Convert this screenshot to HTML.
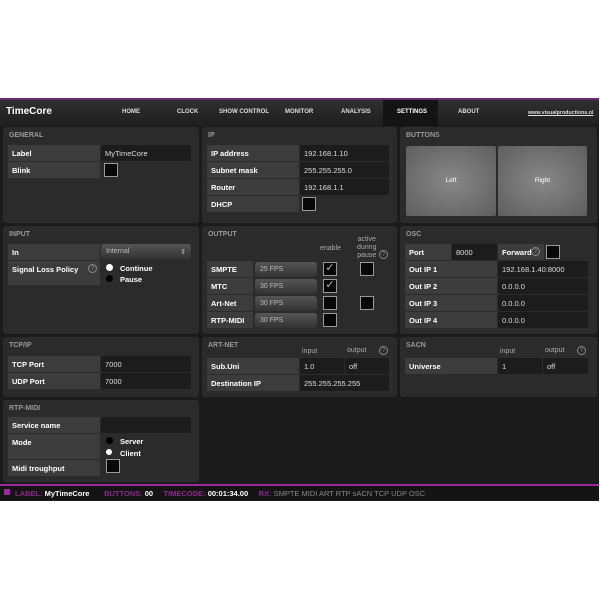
<!DOCTYPE html><html><head><style>
body{margin:0;width:600px;height:600px;background:#fff;position:relative;overflow:hidden;font-family:"Liberation Sans",sans-serif;font-size:7.5px;color:#fff}
div{position:absolute;box-sizing:border-box}
#app{left:0;top:98px;width:599px;height:403px;background:#1b1b1b;border-top:2px solid #6a2a6a}
.p{background:#2b2b2b;border-radius:3px}
.h{color:#9a9a9a;font-weight:bold;font-size:7px;left:6px;top:5px}
.l{background:#3c3c3c;padding:4px 0 0 4px;font-weight:bold;height:17px;border-bottom:1px solid #2b2b2b;white-space:nowrap}
.v{background:#1c1c1c;padding:4px 0 0 4px;height:16px;color:#ddd;border-radius:2px}
.cb{width:14px;height:14px;background:#080808;border:1.5px solid #999;font-size:11px;line-height:11px;text-align:center;color:#bbb}
.sel{height:15px;background:linear-gradient(#555,#333);border-radius:3px;color:#bbb;padding:4px 0 0 5px;font-size:7px}
.q{width:9px;height:9px;border:1px solid #888;border-radius:50%;color:#888;font-size:6px;text-align:center;line-height:8px}
.r{width:7px;height:7px;border-radius:50%;background:#000}
.rw{background:#fff}
.t{font-weight:bold}
.nav{top:9px;font-size:6px;color:#ddd;font-weight:bold}
.g{color:#aaa;font-size:7px}
</style></head><body>
<div id="app">
<div style="left:0;top:0;width:599px;height:26px;background:linear-gradient(#303030,#1e1e1e)"></div>
<div style="left:6px;top:6px;font-size:10px;font-weight:bold">TimeCore</div>
<div style="left:383px;top:0;width:55px;height:26px;background:#141414"></div>
<div class="nav" style="left:122px">HOME</div>
<div class="nav" style="left:177px">CLOCK</div>
<div class="nav" style="left:219px">SHOW CONTROL</div>
<div class="nav" style="left:285px">MONITOR</div>
<div class="nav" style="left:341px">ANALYSIS</div>
<div class="nav" style="left:397px;color:#fff">SETTINGS</div>
<div class="nav" style="left:458px">ABOUT</div>
<div class="nav" style="left:528px;text-decoration:underline;font-size:5.3px;top:10px">www.visualproductions.nl</div>
</div>
<!-- GENERAL -->
<div class="p" style="left:3px;top:127px;width:196px;height:96px"><div class="h">GENERAL</div></div>
<div class="l" style="left:8px;top:145px;width:92px">Label</div><div class="v" style="left:101px;top:145px;width:90px">MyTimeCore</div>
<div class="l" style="left:8px;top:162px;width:92px">Blink</div><div class="cb" style="left:104px;top:163px"></div>
<!-- IP -->
<div class="p" style="left:202px;top:127px;width:195px;height:96px"><div class="h">IP</div></div>
<div class="l" style="left:207px;top:145px;width:92px">IP address</div><div class="v" style="left:300px;top:145px;width:89px">192.168.1.10</div>
<div class="l" style="left:207px;top:162px;width:92px">Subnet mask</div><div class="v" style="left:300px;top:162px;width:89px">255.255.255.0</div>
<div class="l" style="left:207px;top:179px;width:92px">Router</div><div class="v" style="left:300px;top:179px;width:89px">192.168.1.1</div>
<div class="l" style="left:207px;top:196px;width:92px">DHCP</div><div class="cb" style="left:302px;top:197px"></div>
<!-- BUTTONS -->
<div class="p" style="left:400px;top:127px;width:197px;height:96px"><div class="h">BUTTONS</div></div>
<div style="left:406px;top:146px;width:90px;height:70px;background:radial-gradient(#888,#5e5e5e);border-radius:2px;text-align:center;padding-top:31px;font-size:6.5px">Left</div>
<div style="left:498px;top:146px;width:89px;height:70px;background:radial-gradient(#888,#5e5e5e);border-radius:2px;text-align:center;padding-top:31px;font-size:6.5px">Right</div>
<!-- INPUT -->
<div class="p" style="left:3px;top:226px;width:196px;height:108px"><div class="h">INPUT</div></div>
<div class="l" style="left:8px;top:244px;width:92px">In</div><div class="sel" style="left:101px;top:244px;width:90px">Internal<span style="position:absolute;right:5px">⇕</span></div>
<div class="l" style="left:8px;top:261px;width:92px;height:25px">Signal Loss Policy</div><div class="q" style="left:88px;top:264px">?</div>
<div class="r rw" style="left:106px;top:264px"></div><div class="t" style="left:120px;top:264px">Continue</div>
<div class="r" style="left:106px;top:275px"></div><div class="t" style="left:120px;top:275px">Pause</div>
<!-- OUTPUT -->
<div class="p" style="left:202px;top:226px;width:195px;height:108px"><div class="h">OUTPUT</div></div>
<div class="g" style="left:320px;top:245px">enable</div>
<div class="g" style="left:357px;top:236px;text-align:center;line-height:8px">active<br>during<br>pause</div><div class="q" style="left:379px;top:250px">?</div>
<div class="l" style="left:207px;top:261px;width:46px">SMPTE</div><div class="sel" style="left:255px;top:262px;width:62px">25 FPS</div><div class="cb" style="left:323px;top:262px">✓</div><div class="cb" style="left:360px;top:262px"></div>
<div class="l" style="left:207px;top:278px;width:46px">MTC</div><div class="sel" style="left:255px;top:279px;width:62px">30 FPS</div><div class="cb" style="left:323px;top:279px">✓</div>
<div class="l" style="left:207px;top:295px;width:46px">Art-Net</div><div class="sel" style="left:255px;top:296px;width:62px">30 FPS</div><div class="cb" style="left:323px;top:296px"></div><div class="cb" style="left:360px;top:296px"></div>
<div class="l" style="left:207px;top:312px;width:46px">RTP-MIDI</div><div class="sel" style="left:255px;top:313px;width:62px">30 FPS</div><div class="cb" style="left:323px;top:313px"></div>
<!-- OSC -->
<div class="p" style="left:400px;top:226px;width:197px;height:108px"><div class="h">OSC</div></div>
<div class="l" style="left:405px;top:244px;width:46px">Port</div><div class="v" style="left:452px;top:244px;width:45px">8000</div>
<div class="l" style="left:498px;top:244px;width:46px">Forward</div><div class="q" style="left:531px;top:247px">?</div><div class="cb" style="left:546px;top:245px"></div>
<div class="l" style="left:405px;top:261px;width:92px">Out IP 1</div><div class="v" style="left:498px;top:261px;width:90px">192.168.1.40:8000</div>
<div class="l" style="left:405px;top:278px;width:92px">Out IP 2</div><div class="v" style="left:498px;top:278px;width:90px">0.0.0.0</div>
<div class="l" style="left:405px;top:295px;width:92px">Out IP 3</div><div class="v" style="left:498px;top:295px;width:90px">0.0.0.0</div>
<div class="l" style="left:405px;top:312px;width:92px">Out IP 4</div><div class="v" style="left:498px;top:312px;width:90px">0.0.0.0</div>
<!-- TCP/IP -->
<div class="p" style="left:3px;top:337px;width:196px;height:60px"><div class="h">TCP/IP</div></div>
<div class="l" style="left:8px;top:356px;width:92px">TCP Port</div><div class="v" style="left:101px;top:356px;width:90px">7000</div>
<div class="l" style="left:8px;top:373px;width:92px">UDP Port</div><div class="v" style="left:101px;top:373px;width:90px">7000</div>
<!-- ART-NET -->
<div class="p" style="left:202px;top:337px;width:195px;height:60px"><div class="h">ART-NET</div></div>
<div class="g" style="left:302px;top:348px">input</div><div class="g" style="left:347px;top:347px">output</div><div class="q" style="left:379px;top:346px">?</div>
<div class="l" style="left:207px;top:358px;width:92px">Sub.Uni</div><div class="v" style="left:300px;top:358px;width:44px">1.0</div><div class="v" style="left:345px;top:358px;width:44px">off</div>
<div class="l" style="left:207px;top:375px;width:92px">Destination IP</div><div class="v" style="left:300px;top:375px;width:89px">255.255.255.255</div>
<!-- SACN -->
<div class="p" style="left:400px;top:337px;width:197px;height:60px"><div class="h">SACN</div></div>
<div class="g" style="left:500px;top:348px">input</div><div class="g" style="left:545px;top:347px">output</div><div class="q" style="left:577px;top:346px">?</div>
<div class="l" style="left:405px;top:358px;width:92px">Universe</div><div class="v" style="left:498px;top:358px;width:44px">1</div><div class="v" style="left:543px;top:358px;width:45px">off</div>
<!-- RTP-MIDI -->
<div class="p" style="left:3px;top:400px;width:196px;height:82px"><div class="h">RTP-MIDI</div></div>
<div class="l" style="left:8px;top:417px;width:92px">Service name</div><div class="v" style="left:101px;top:417px;width:90px"></div>
<div class="l" style="left:8px;top:434px;width:92px;height:26px">Mode</div>
<div class="r" style="left:106px;top:437px"></div><div class="t" style="left:120px;top:437px">Server</div>
<div class="r rw" style="left:106px;top:449px;width:6px;height:6px"></div><div class="t" style="left:120px;top:449px">Client</div>
<div class="l" style="left:8px;top:460px;width:92px">Midi troughput</div><div class="cb" style="left:106px;top:459px"></div>
<!-- status -->
<div style="left:0;top:484px;width:599px;height:2px;background:#9a2a9a"></div>
<div style="left:0;top:486px;width:599px;height:14px;background:#141414"></div>
<div style="left:4px;top:489px;width:6px;height:6px;background:#9a2a9a"></div>
<div style="left:15px;top:489px;font-size:7.5px;font-weight:bold;white-space:nowrap;color:#8a2a8a">LABEL: <span style="color:#fff">MyTimeCore</span>&nbsp;&nbsp;&nbsp;&nbsp;&nbsp;&nbsp; BUTTONS: <span style="color:#fff">00</span>&nbsp;&nbsp;&nbsp;&nbsp; TIMECODE: <span style="color:#fff">00:01:34.00</span>&nbsp;&nbsp;&nbsp;&nbsp; RX: <span style="color:#888;font-weight:normal">SMPTE MIDI ART RTP sACN TCP UDP OSC</span></div>
</body></html>
